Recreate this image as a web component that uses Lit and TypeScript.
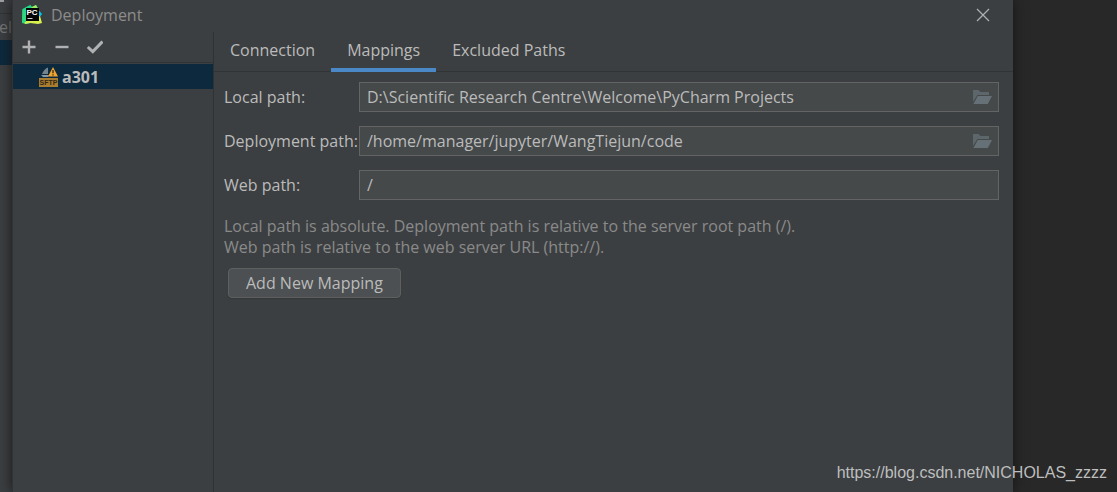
import { LitElement, html, css, svg } from "lit";
import { customElement, state } from "lit/decorators.js";

const folderIcon = svg`
  <svg class="folder-icon" viewBox="0 0 20 16" aria-hidden="true">
    <path d="M1 13V1H6.5L8.5 3H17V6H5.5Z" fill="#5c666b" />
    <path d="M5.8 7H20L15.8 15H1.4Z" fill="#667177" />
  </svg>`;

const logo = svg`
  <svg class="logo" viewBox="0 0 20 20" aria-hidden="true">
    <path d="M0.5 4L7 0.5L8.5 0L10 2L14 0L16 3L14 17L4 19L0 18Z" fill="#21d789" />
    <path d="M14 4L17.5 6L20 9L17 13L14 12Z" fill="#07c3f2" />
    <path d="M1 14L5 16L15 12L18 11L20 18L16 19L8 18L3 19Z" fill="#d8f04f" />
    <path d="M0.5 4L4 7V17L0 18Z" fill="#2fd77d" />
    <path d="M10 2L14 0L15.5 3H9Z" fill="#a5ea5a" />
    <rect x="4" y="3" width="13" height="13" fill="#050505" />
    <text x="4.4" y="10" class="logo-text">PC</text>
    <rect x="5.5" y="13" width="5" height="1" fill="#d0d0d0" />
  </svg>`;

const sftpIcon = svg`
  <svg class="sftp" viewBox="0 0 19 20" aria-hidden="true">
    <path d="M9 0.5V7H3C4.5 4 6 1.5 9 0.5Z" fill="#74848f" />
    <path d="M2 8H10L9 10H4Z" fill="#8798a4" />
    <path d="M14 0L19 9.5H9Z" fill="#f0a732" />
    <path d="M14 3V6.2M14 7.2V8.6" stroke="#4d3a19" stroke-width="1.5" />
    <rect x="0" y="11" width="19" height="9" fill="#a97d2f" />
    <text x="0.6" y="18.4" class="sftp-text">SFTP</text>
  </svg>`;

@customElement("app-root")
export class AppRoot extends LitElement {
  @state() private activeTab = "Mappings";

  static styles = css`
    :host {
      display: block;
      position: relative;
      min-height: 100vh;
      overflow: hidden;
      background: #282828;
      color: #bbbbbb;
      font: 16px/22px "Open Sans", "Noto Sans", sans-serif;
    }
    * { box-sizing: border-box; }
    .screen { display: flex; min-height: 100vh; }
    .behind {
      flex: 0 0 12px;
      display: flex;
      flex-direction: column;
      overflow: hidden;
      background: #3c3f41;
    }
    .behind-top { height: 14px; border-bottom: 1px solid #313335; }
    .behind-mark { display: block; width: 4px; height: 2px; background: #a0a2a4; }
    .behind-tab {
      display: flex;
      align-items: center;
      justify-content: flex-end;
      height: 26px;
      color: #777777;
    }
    .behind-selection { height: 25px; background: #0d293e; }
    .dialog {
      flex: 1;
      display: flex;
      flex-direction: column;
      min-width: 0;
      margin-right: 104px;
      background: #3c3f41;
      border-left: 1px solid #313335;
      box-shadow: 0 0 12px #161616;
    }
    .titlebar {
      display: flex;
      align-items: center;
      gap: 9px;
      height: 32px;
      padding: 0 22px 2px 9px;
      color: #8c8c8c;
    }
    .title { flex: 1; margin: 0; font-size: 16px; font-weight: 400; }
    .logo { width: 20px; height: 20px; }
    .logo-text { font: 700 8px "Liberation Sans", sans-serif; fill: #ffffff; }
    .plain { display: flex; padding: 0; border: 0; background: none; color: #afb1b3; }
    .glyph { width: 16px; height: 16px; fill: none; stroke: currentColor; }
    .body { flex: 1; display: flex; }
    .sidebar { flex: 0 0 201px; border-right: 1px solid #2f3234; }
    .toolbar {
      display: flex;
      align-items: center;
      gap: 17px;
      height: 31px;
      padding-left: 8px;
      border-bottom: 1px solid #313335;
    }
    .servers { margin: 0; padding: 1px 0 0; list-style: none; }
    .server {
      display: flex;
      align-items: center;
      gap: 4px;
      height: 25px;
      padding-left: 26px;
      background: #0d293e;
      font-weight: 700;
    }
    .sftp { width: 19px; height: 20px; }
    .sftp-text { font: 700 7px "Liberation Sans", sans-serif; fill: #332814; }
    .content { flex: 1; min-width: 0; }
    .tabs { display: flex; height: 40px; border-bottom: 1px solid #313335; }
    .tab {
      height: 40px;
      padding: 0 16px;
      border: 0;
      border-bottom: 4px solid transparent;
      background: none;
      color: inherit;
      font: inherit;
    }
    .tab.active { border-bottom-color: #4a88c7; }
    .form {
      display: grid;
      grid-template-columns: 131px 1fr;
      align-items: center;
      gap: 14px 4px;
      padding: 10px 14px 0 10px;
    }
    .label { white-space: nowrap; }
    .field {
      display: flex;
      align-items: center;
      height: 30px;
      padding: 0 6px 0 7px;
      border: 1px solid #646464;
      background: #45494a;
    }
    .input {
      flex: 1;
      min-width: 0;
      padding: 0;
      border: 0;
      outline: 0;
      background: none;
      color: inherit;
      font: inherit;
    }
    .folder-icon { display: block; width: 20px; height: 16px; }
    .hint { margin: 0; padding: 16px 14px 0 10px; color: #8a8a8a; line-height: 21px; }
    .add {
      height: 30px;
      margin: 10px 14px;
      padding: 0 17px;
      border: 1px solid #5e6060;
      border-radius: 4px;
      background: #4c5052;
      box-shadow: 0 1px 1px #35383a;
      color: inherit;
      font: inherit;
    }
    .watermark {
      position: absolute;
      right: 10px;
      bottom: 8px;
      color: #bdbebf;
      font: 16px/22px "Liberation Sans", sans-serif;
    }
  `;

  private field(id: string, label: string, value: string, browse: boolean) {
    return html`
      <label class="label" for=${id}>${label}</label>
      <div class="field">
        <input class="input" id=${id} type="text" spellcheck="false" .value=${value} />
        ${browse
          ? html`<button class="plain" aria-label="Browse">${folderIcon}</button>`
          : ""}
      </div>`;
  }

  render() {
    return html`
      <div class="screen">
        <div class="behind">
          <div class="behind-top"><span class="behind-mark"></span></div>
          <div class="behind-tab">Wel</div>
          <div class="behind-selection"></div>
        </div>
        <main class="dialog">
          <header class="titlebar">
            ${logo}
            <h1 class="title">Deployment</h1>
            <button class="plain" aria-label="Close">
              <svg class="glyph" viewBox="0 0 16 16"><path d="M2 2L14 14M14 2L2 14" stroke-width="1.2" /></svg>
            </button>
          </header>
          <div class="body">
            <aside class="sidebar">
              <div class="toolbar">
                <button class="plain" aria-label="Add">
                  <svg class="glyph" viewBox="0 0 16 16"><path d="M8 1.5V14.5M1.5 8H14.5" stroke-width="2.4" /></svg>
                </button>
                <button class="plain" aria-label="Remove">
                  <svg class="glyph" viewBox="0 0 16 16"><path d="M1.5 8H14.5" stroke-width="2.4" /></svg>
                </button>
                <button class="plain" aria-label="Use as default">
                  <svg class="glyph" viewBox="0 0 16 16"><path d="M0.8 8L5.8 12.6L15.5 2.5" stroke-width="3" /></svg>
                </button>
              </div>
              <ul class="servers">
                <li class="server">${sftpIcon}<span>a301</span></li>
              </ul>
            </aside>
            <section class="content">
              <nav class="tabs" role="tablist">
                ${["Connection", "Mappings", "Excluded Paths"].map(
                  (name) => html`<button
                    class="tab ${name === this.activeTab ? "active" : ""}"
                    role="tab"
                    aria-selected=${name === this.activeTab}
                    @click=${() => (this.activeTab = name)}
                  >${name}</button>`
                )}
              </nav>
              <div class="form">
                ${this.field("local", "Local path:", "D:\\Scientific Research Centre\\Welcome\\PyCharm Projects", true)}
                ${this.field("deploy", "Deployment path:", "/home/manager/jupyter/WangTiejun/code", true)}
                ${this.field("web", "Web path:", "/", false)}
              </div>
              <p class="hint">
                Local path is absolute. Deployment path is relative to the server root path (/).<br />
                Web path is relative to the web server URL (http://).
              </p>
              <button class="add">Add New Mapping</button>
            </section>
          </div>
        </main>
      </div>
      <div class="watermark">https://blog.csdn.net/NICHOLAS_zzzz</div>
    `;
  }
}
